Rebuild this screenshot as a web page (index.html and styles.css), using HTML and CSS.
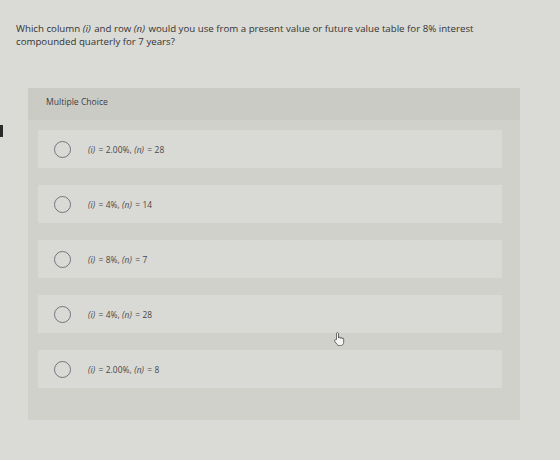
FILE: index.html
```html
<!DOCTYPE html>
<html lang="en">
<head>
    <meta charset="UTF-8">
    <meta name="viewport" content="width=device-width, initial-scale=1.0">
    <title>Question</title>
    <link rel="stylesheet" href="styles.css">
</head>
<body>
    <span class="edge-mark"></span>

    <div class="question">
        Which column <em>(i)</em> and row <em>(n)</em> would you use from a present value or future value table for 8% interest
        compounded quarterly for 7 years?
    </div>

    <div class="panel">
        <div class="panel-header">Multiple Choice</div>
        <div class="choices">
            <label class="choice"><span class="radio"></span><span><em>(i)</em> = 2.00%, <em>(n)</em> = 28</span></label>
            <label class="choice"><span class="radio"></span><span><em>(i)</em> = 4%, <em>(n)</em> = 14</span></label>
            <label class="choice"><span class="radio"></span><span><em>(i)</em> = 8%, <em>(n)</em> = 7</span></label>
            <label class="choice"><span class="radio"></span><span><em>(i)</em> = 4%, <em>(n)</em> = 28</span></label>
            <label class="choice"><span class="radio"></span><span><em>(i)</em> = 2.00%, <em>(n)</em> = 8</span></label>
        </div>
    </div>

    <!-- mouse pointer -->
    <svg class="pointer" width="12" height="14" viewBox="0 0 12 14">
        <path d="M3.5 7.5V1.6c0-.6.4-1 1-1s1 .4 1 1V6c0-.5.4-.9.9-.9s.9.4.9.9v.4c0-.5.4-.9.9-.9s.9.4.9.9v.5c0-.5.4-.8.8-.8s.8.4.8.8v3.3c0 2-1.3 3.4-3.2 3.4H6.2c-1 0-1.7-.5-2.3-1.3L1.6 9c-.3-.5-.2-1 .2-1.2.4-.3.9-.2 1.2.2z" fill="#f4f4f2" stroke="#4a4a4a" stroke-width="0.8" stroke-linejoin="round"/>
    </svg>
</body>
</html>
```

FILE: styles.css
```css
body {
    font-family: "Open Sans", Lato, sans-serif;
    background-color: #dadbd6;
    margin: 0;
    padding: 0;
    color: #333;
    position: relative;
    height: 460px;
    overflow: hidden;
}
.edge-mark {
    position: absolute;
    left: 0;
    top: 125px;
    width: 3px;
    height: 12px;
    background-color: #2a2a2a;
}
.question {
    padding: 22px 16px 0;
    font-size: 9.7px;
    line-height: 13px;
    width: 480px;
}
.question em {
    font-style: italic;
    padding-right: 1px;
}
.panel {
    margin: 40px 40px 0 28px;
    background-color: #d1d1cc;
}
.panel-header {
    background-color: #cbcbc6;
    height: 32px;
    padding-left: 18px;
    font-size: 8.6px;
    line-height: 28px;
    color: #3f3f3f;
}
.choices {
    display: flex;
    flex-direction: column;
    gap: 17px;
    padding: 10px 18px 32px 10px;
}
.choice {
    display: flex;
    align-items: center;
    height: 38px;
    padding-left: 16px;
    background-color: #d9d9d5;
    font-size: 8.4px;
    letter-spacing: 0.1px;
    color: #474747;
}
.choice em {
    padding-right: 1px;
}
.radio {
    width: 15px;
    height: 15px;
    border: 1.6px solid #6f7780;
    border-radius: 50%;
    margin-right: 17px;
    flex-shrink: 0;
}
.pointer {
    position: absolute;
    left: 333px;
    top: 332px;
}
```
